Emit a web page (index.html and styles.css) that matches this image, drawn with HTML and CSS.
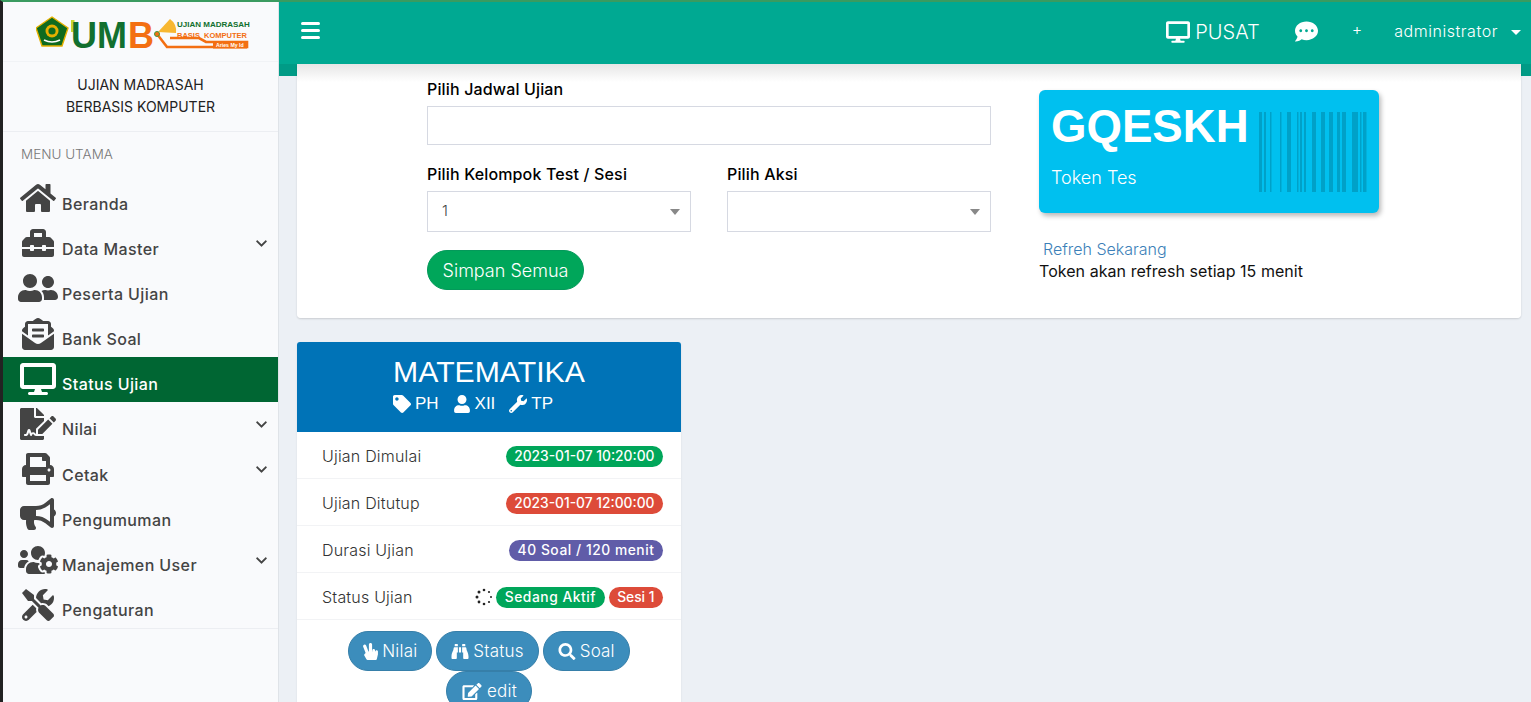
FILE: index.html
```html
<!DOCTYPE html>
<html lang="id">
<head>
<meta charset="utf-8">
<title>Status Ujian</title>
<link rel="stylesheet" href="styles.css">
</head>
<body>
<svg class="defs" width="0" height="0" aria-hidden="true">
<defs>
<symbol id="i-home" viewBox="0 0 576 512"><path d="M280.37 148.26L96 300.11V464a16 16 0 0 0 16 16l112.06-.29a16 16 0 0 0 15.92-16V368a16 16 0 0 1 16-16h64a16 16 0 0 1 16 16v95.64a16 16 0 0 0 16 16.05L464 480a16 16 0 0 0 16-16V300L295.67 148.26a12.19 12.19 0 0 0-15.3 0zM571.6 251.47L488 182.56V44.05a12 12 0 0 0-12-12h-56a12 12 0 0 0-12 12v72.61L318.47 43a48 48 0 0 0-61 0L4.34 251.47a12 12 0 0 0-1.6 16.9l25.5 31A12 12 0 0 0 45.15 301l235.22-193.74a12.19 12.19 0 0 1 15.3 0L530.9 301a12 12 0 0 0 16.9-1.6l25.5-31a12 12 0 0 0-1.7-16.93z"/></symbol>
<symbol id="i-toolbox" viewBox="0 0 512 512"><path d="M502.63 214.63l-45.25-45.25c-6-6-14.14-9.37-22.63-9.37H384V80c0-26.51-21.49-48-48-48H176c-26.51 0-48 21.49-48 48v80H77.25c-8.49 0-16.62 3.37-22.63 9.37L9.37 214.63c-6 6-9.37 14.14-9.37 22.63V320h128v-16c0-8.84 7.16-16 16-16h32c8.84 0 16 7.16 16 16v16h128v-16c0-8.84 7.16-16 16-16h32c8.84 0 16 7.16 16 16v16h128v-82.75c0-8.48-3.37-16.62-9.37-22.62zM320 160H192V96h128v64zm64 208c0 8.84-7.16 16-16 16h-32c-8.84 0-16-7.16-16-16v-16H192v16c0 8.84-7.16 16-16 16h-32c-8.84 0-16-7.16-16-16v-16H0v96c0 17.67 14.33 32 32 32h448c17.67 0 32-14.33 32-32v-96H384v16z"/></symbol>
<symbol id="i-friends" viewBox="0 0 640 512"><path d="M192 256c61.9 0 112-50.1 112-112S253.9 32 192 32 80 82.1 80 144s50.1 112 112 112zm76.8 32h-8.3c-20.8 10-43.9 16-68.5 16s-47.6-6-68.5-16h-8.3C51.6 288 0 339.6 0 403.2V432c0 26.5 21.5 48 48 48h288c26.5 0 48-21.5 48-48v-28.8c0-63.6-51.6-115.2-115.2-115.2zM480 256c53 0 96-43 96-96s-43-96-96-96-96 43-96 96 43 96 96 96zm48 32h-3.8c-13.9 4.8-28.6 8-44.2 8s-30.3-3.2-44.2-8H432c-20.4 0-39.2 5.9-55.7 15.4 24.4 26.3 39.7 61.2 39.7 99.8v38.4c0 2.2-.5 4.3-.6 6.4H592c26.5 0 48-21.5 48-48 0-61.9-50.1-112-112-112z"/></symbol>
<symbol id="i-envelope" viewBox="0 0 512 512"><path d="M176 216h160c8.84 0 16-7.16 16-16v-16c0-8.84-7.16-16-16-16H176c-8.84 0-16 7.16-16 16v16c0 8.84 7.16 16 16 16zm-16 80c0 8.84 7.16 16 16 16h160c8.84 0 16-7.16 16-16v-16c0-8.84-7.16-16-16-16H176c-8.84 0-16 7.16-16 16v16zm96 121.13c-16.42 0-32.84-5.06-46.86-15.19L0 250.86V464c0 26.51 21.49 48 48 48h416c26.51 0 48-21.49 48-48V250.86L302.86 401.94c-14.02 10.12-30.44 15.19-46.86 15.19zm237.61-254.18c-8.85-6.94-17.24-13.47-29.61-22.81V96c0-26.51-21.49-48-48-48h-77.55c-3.04-2.2-5.87-4.26-9.04-6.56C312.6 29.17 279.2-.35 256 0c-23.2-.35-56.59 29.17-73.41 41.44-3.17 2.3-6 4.36-9.04 6.56H96c-26.51 0-48 21.49-48 48v44.14c-12.37 9.33-20.76 15.87-29.61 22.81A47.995 47.995 0 0 0 0 200.72v10.65l96 69.35V96h320v184.72l96-69.35v-10.65c0-14.74-6.78-28.67-18.39-37.77z"/></symbol>
<symbol id="i-desktop" viewBox="0 0 576 512"><path d="M528 0H48C21.5 0 0 21.5 0 48v320c0 26.5 21.5 48 48 48h192l-16 48h-72c-13.3 0-24 10.7-24 24s10.7 24 24 24h272c13.3 0 24-10.7 24-24s-10.7-24-24-24h-72l-16-48h192c26.5 0 48-21.5 48-48V48c0-26.5-21.5-48-48-48zm-16 352H64V64h448v288z"/></symbol>
<symbol id="i-sign" viewBox="0 0 576 512"><path d="M218.17 424.14c-2.95-5.92-8.09-6.52-10.17-6.52s-7.22.59-10.02 6.19l-7.67 15.34c-6.37 12.78-25.03 11.37-29.48-2.09L144 386.59l-10.61 31.88c-5.89 17.66-22.38 29.53-41 29.53H80c-8.84 0-16-7.16-16-16s7.16-16 16-16h12.39c4.83 0 9.11-3.08 10.64-7.66l18.19-54.64c3.3-9.81 12.44-16.41 22.78-16.41s19.48 6.59 22.77 16.41l13.88 41.64c19.75-16.19 54.06-9.7 66 14.16 1.89 3.78 5.49 5.95 9.36 6.26v-82.12l128-127.09V160H248c-13.2 0-24-10.8-24-24V0H24C10.7 0 0 10.7 0 24v464c0 13.3 10.7 24 24 24h336c13.3 0 24-10.7 24-24v-40l-128-.11c-16.12-.31-30.58-9.28-37.83-23.75zM384 121.9c0-6.3-2.5-12.4-7-16.9L279.1 7c-4.5-4.5-10.6-7-17-7H256v128h128v-6.1zm-96 225.06V416h68.99l161.68-162.78-67.88-67.88L288 346.96zm280.54-179.63l-31.87-31.87c-9.94-9.94-26.07-9.94-36.01 0l-27.25 27.25 67.88 67.88 27.25-27.25c9.95-9.94 9.95-26.07 0-36.01z"/></symbol>
<symbol id="i-print" viewBox="0 0 512 512"><path d="M448 192V77.25c0-8.49-3.37-16.62-9.37-22.63L393.37 9.37c-6-6-14.14-9.37-22.63-9.37H96C78.33 0 64 14.33 64 32v160c-35.35 0-64 28.65-64 64v112c0 8.84 7.16 16 16 16h48v96c0 17.67 14.33 32 32 32h320c17.67 0 32-14.33 32-32v-96h48c8.84 0 16-7.16 16-16V256c0-35.35-28.65-64-64-64zm-64 256H128v-96h256v96zm0-224H128V64h192v48c0 8.84 7.16 16 16 16h48v96zm48 72c-13.25 0-24-10.75-24-24 0-13.26 10.75-24 24-24s24 10.74 24 24c0 13.25-10.75 24-24 24z"/></symbol>
<symbol id="i-bullhorn" viewBox="0 0 576 512"><path d="M576 240c0-23.63-12.95-44.04-32-55.12V32.01C544 23.26 537.02 0 512 0c-7.12 0-14.19 2.38-19.98 7.02l-85.03 68.03C364.28 109.19 310.66 128 256 128H64c-35.35 0-64 28.65-64 64v96c0 35.35 28.65 64 64 64h33.7c-1.39 10.48-2.18 21.14-2.18 32 0 39.77 9.26 77.35 25.56 110.94 5.19 10.69 16.52 17.06 28.4 17.06h74.28c26.05 0 41.69-29.84 25.9-50.56-16.4-21.52-26.15-48.36-26.15-77.44 0-11.11 1.62-21.79 4.41-32H256c54.66 0 108.28 18.81 150.98 52.95l85.03 68.03a32.023 32.023 0 0 0 19.98 7.02c24.92 0 32-22.78 32-32V295.13C563.05 284.04 576 263.63 576 240zm-96 141.42l-33.05-26.44C392.95 311.78 325.12 288 256 288v-96c69.12 0 136.95-23.78 190.95-66.98L480 98.58v282.84z"/></symbol>
<symbol id="i-userscog" viewBox="0 0 640 512"><path d="M610.5 341.3c2.6-14.1 2.6-28.5 0-42.6l25.8-14.9c3-1.7 4.3-5.2 3.3-8.5-6.7-21.5-18.2-41-33.2-57.1-2.3-2.5-6-3.1-9-1.4l-25.8 14.9c-10.9-9.3-23.4-16.5-36.9-21.3v-29.8c0-3.4-2.4-6.4-5.7-7.1-22.3-5-45-4.8-66.2 0-3.3.7-5.7 3.7-5.7 7.1v29.8c-13.5 4.8-26 12-36.9 21.3l-25.8-14.9c-2.9-1.7-6.7-1.1-9 1.4-15 16.1-26.5 35.6-33.2 57.1-1 3.3.4 6.8 3.3 8.5l25.8 14.9c-2.6 14.1-2.6 28.5 0 42.6l-25.8 14.9c-3 1.7-4.3 5.2-3.3 8.5 6.7 21.5 18.2 41 33.2 57.1 2.3 2.5 6 3.1 9 1.4l25.8-14.9c10.9 9.3 23.4 16.5 36.9 21.3v29.8c0 3.4 2.4 6.4 5.7 7.1 22.3 5 45 4.8 66.2 0 3.3-.7 5.7-3.7 5.7-7.1v-29.8c13.5-4.8 26-12 36.9-21.3l25.8 14.9c2.9 1.7 6.7 1.1 9-1.4 15-16.1 26.5-35.6 33.2-57.1 1-3.3-.4-6.8-3.3-8.5l-25.8-14.9zM496 368.5c-26.8 0-48.5-21.8-48.5-48.5s21.8-48.5 48.5-48.5 48.5 21.8 48.5 48.5-21.7 48.5-48.5 48.5zM96 224c35.3 0 64-28.7 64-64s-28.7-64-64-64-64 28.7-64 64 28.7 64 64 64zm224 32c1.9 0 3.7-.5 5.6-.6 8.3-21.7 20.5-42.1 36.3-59.2 7.4-8 17.9-12.6 28.9-12.6 6.9 0 13.7 1.8 19.6 5.3l7.9 4.6c.8-.5 1.6-.9 2.4-1.4 7-14.6 11.2-30.8 11.2-48 0-61.9-50.1-112-112-112S208 82.1 208 144c0 61.9 50.1 112 112 112zm105.2 194.5c-2.3-1.2-4.6-2.6-6.8-3.9-8.2 4.8-15.3 9.8-27.5 9.8-10.9 0-21.4-4.6-28.9-12.6-18.3-19.8-32.3-43.9-40.2-69.6-10.7-34.5 24.9-49.7 25.8-50.3-.1-2.6-.1-5.2 0-7.8l-7.9-4.6c-3.8-2.2-7-5-9.8-8.1-3.3.2-6.5.6-9.8.6-24.6 0-47.6-6-68.5-16h-8.3C179.6 288 128 339.6 128 403.2V432c0 26.5 21.5 48 48 48h255.4c-3.7-6-6.2-12.8-6.2-20.3v-9.2zM173.1 274.6C161.5 263.1 145.6 256 128 256H64c-35.3 0-64 28.7-64 64v32c0 17.7 14.3 32 32 32h65.9c6.3-47.4 34.9-87.3 75.2-109.4z"/></symbol>
<symbol id="i-tools" viewBox="0 0 512 512"><path d="M501.1 395.7L384 278.6c-23.1-23.1-57.6-27.6-85.4-13.9L192 158.1V96L64 0 0 64l96 128h62.1l106.6 106.6c-13.6 27.8-9.2 62.3 13.9 85.4l117.1 117.1c14.6 14.6 38.2 14.6 52.7 0l52.7-52.7c14.5-14.6 14.5-38.2 0-52.7zM331.7 225c28.3 0 54.9 11 74.9 31l19.4 19.4c15.8-6.9 30.8-16.5 43.8-29.5 37.1-37.1 49.7-89.3 37.9-136.7-2.2-9-13.5-12.1-20.1-5.5l-74.4 74.4-67.9-11.3L334 98.9l74.4-74.4c6.6-6.6 3.4-17.9-5.7-20.2-47.4-11.7-99.6.9-136.6 37.9-28.5 28.5-41.9 66.1-41.2 103.6l82.1 82.1c8.1-1.9 16.5-2.9 24.7-2.9zm-103.9 82l-56.7-56.7L18.7 402.8c-25 25-25 65.5 0 90.5s65.5 25 90.5 0l123.6-123.6c-7.6-19.9-9.9-41.6-5-62.7zM64 472c-13.2 0-24-10.8-24-24 0-13.3 10.7-24 24-24s24 10.7 24 24c0 13.2-10.7 24-24 24z"/></symbol>
<symbol id="i-chevron" viewBox="0 0 448 512"><path d="M207.029 381.476L12.686 187.132c-9.373-9.373-9.373-24.569 0-33.941l22.667-22.667c9.357-9.357 24.522-9.375 33.901-.04L224 284.505l154.745-154.021c9.379-9.335 24.544-9.317 33.901.04l22.667 22.667c9.373 9.373 9.373 24.569 0 33.941L240.971 381.476c-9.373 9.372-24.569 9.372-33.942 0z"/></symbol>
<symbol id="i-comment" viewBox="0 0 512 512"><path d="M256 32C114.6 32 0 125.1 0 240c0 49.6 21.4 95 57 130.7C44.5 421.1 2.7 466 2.2 466.5c-2.2 2.3-2.8 5.7-1.5 8.7S4.8 480 8 480c66.3 0 116-31.8 140.6-51.4 32.7 12.3 69 19.4 107.4 19.4 141.4 0 256-93.1 256-208S397.4 32 256 32zM128 272c-17.7 0-32-14.3-32-32s14.3-32 32-32 32 14.3 32 32-14.3 32-32 32zm128 0c-17.7 0-32-14.3-32-32s14.3-32 32-32 32 14.3 32 32-14.3 32-32 32zm128 0c-17.7 0-32-14.3-32-32s14.3-32 32-32 32 14.3 32 32-14.3 32-32 32z"/></symbol>
<symbol id="i-tag" viewBox="0 0 512 512"><path d="M0 252.118V48C0 21.49 21.49 0 48 0h204.118a48 48 0 0 1 33.941 14.059l211.882 211.882c18.745 18.745 18.745 49.137 0 67.882L293.823 497.941c-18.745 18.745-49.137 18.745-67.882 0L14.059 286.059A48 48 0 0 1 0 252.118zM112 64c-26.51 0-48 21.49-48 48s21.49 48 48 48 48-21.49 48-48-21.49-48-48-48z"/></symbol>
<symbol id="i-user" viewBox="0 0 448 512"><path d="M224 256c70.7 0 128-57.3 128-128S294.7 0 224 0 96 57.3 96 128s57.3 128 128 128zm89.6 32h-16.7c-22.2 10.2-46.9 16-72.9 16s-50.6-5.8-72.9-16h-16.7C60.2 288 0 348.2 0 422.4V464c0 26.5 21.5 48 48 48h352c26.5 0 48-21.5 48-48v-41.6c0-74.2-60.2-134.4-134.4-134.4z"/></symbol>
<symbol id="i-wrench" viewBox="0 0 512 512"><path d="M507.73 109.1c-2.24-9.03-13.54-12.09-20.12-5.51l-74.36 74.36-67.88-11.31-11.31-67.88 74.36-74.36c6.62-6.62 3.43-17.9-5.66-20.16-47.38-11.74-99.55.91-136.58 37.93-39.64 39.64-50.55 97.1-34.05 147.2L18.74 402.76c-24.99 24.99-24.99 65.51 0 90.5 24.99 24.99 65.51 24.99 90.5 0l213.21-213.21c50.12 16.71 107.47 5.68 147.37-34.22 37.07-37.07 49.7-89.32 37.91-136.73zM64 472c-13.25 0-24-10.75-24-24 0-13.26 10.75-24 24-24s24 10.74 24 24c0 13.25-10.75 24-24 24z"/></symbol>
<symbol id="i-search" viewBox="0 0 512 512"><path d="M505 442.7L405.3 343c-4.5-4.5-10.6-7-17-7H372c27.6-35.3 44-79.7 44-128C416 93.1 322.9 0 208 0S0 93.1 0 208s93.1 208 208 208c48.3 0 92.7-16.4 128-44v16.3c0 6.4 2.5 12.5 7 17l99.7 99.7c9.4 9.4 24.6 9.4 33.9 0l28.3-28.3c9.4-9.4 9.4-24.6.1-34zM208 336c-70.7 0-128-57.2-128-128 0-70.7 57.2-128 128-128 70.7 0 128 57.2 128 128 0 70.7-57.2 128-128 128z"/></symbol>
<symbol id="i-edit" viewBox="0 0 576 512"><path d="M402.6 83.2l90.2 90.2c3.8 3.8 3.8 10 0 13.8L274.4 405.6l-92.8 10.3c-12.4 1.4-22.9-9.1-21.5-21.5l10.3-92.8L388.8 83.2c3.8-3.8 10-3.8 13.8 0zm162-22.9l-48.8-48.8c-15.2-15.2-39.9-15.2-55.2 0l-35.4 35.4c-3.8 3.8-3.8 10 0 13.8l90.2 90.2c3.8 3.8 10 3.8 13.8 0l35.4-35.4c15.2-15.3 15.2-40 0-55.2zM384 346.2V448H64V128h229.8c3.2 0 6.2-1.3 8.5-3.5l40-40c7.6-7.6 2.2-20.5-8.5-20.5H48C21.5 64 0 85.5 0 112v352c0 26.5 21.5 48 48 48h352c26.5 0 48-21.5 48-48V306.2c0-10.7-12.9-16-20.5-8.5l-40 40c-2.2 2.3-3.5 5.3-3.5 8.5z"/></symbol>
<symbol id="i-binoculars" viewBox="0 0 512 512"><path d="M416 48c0-8.84-7.16-16-16-16h-64c-8.84 0-16 7.16-16 16v48h96V48zM63.91 159.99C61.4 253.84 3.46 274.22 0 404v44c0 17.67 14.33 32 32 32h96c17.67 0 32-14.33 32-32V288h32V128H95.84c-17.63 0-31.45 14.37-31.93 31.99zm384.18 0c-.48-17.62-14.3-31.99-31.93-31.99H320v160h32v160c0 17.67 14.33 32 32 32h96c17.67 0 32-14.33 32-32v-44c-3.46-129.78-61.4-150.16-63.91-244.01zM176 32h-64c-8.84 0-16 7.16-16 16v48h96V48c0-8.84-7.16-16-16-16zm48 256h64V128h-64v160z"/></symbol>
<symbol id="i-peace" viewBox="0 0 448 512"><path d="M408 216c-22.092 0-40 17.909-40 40h-8v-32c0-22.091-17.908-40-40-40s-40 17.909-40 40v32h-8V48c0-26.51-21.49-48-48-48s-48 21.49-48 48v208h-13.572L92.688 78.449C82.994 53.774 55.134 41.63 30.461 51.324 5.787 61.017-6.356 88.877 3.337 113.551l74.765 190.342-31.09 24.872c-15.381 12.306-19.515 33.978-9.741 51.081l64 112A39.998 39.998 0 0 0 136 512h240c18.562 0 34.686-12.77 38.937-30.838l32-136A39.97 39.97 0 0 0 448 336v-80c0-22.091-17.908-40-40-40z"/></symbol>
</defs>
</svg>

<div class="app">
  <aside class="sidebar">
    <div class="logo-box">
      <svg class="logo" viewBox="0 -3 216 43" width="216" height="43" role="img" aria-label="UMB">
        <path d="M16 0 L32 11 L26 29 L6 29 L0 11 Z" fill="#0f6b1f" stroke="#e5b000" stroke-width="1.4"/>
        <circle cx="16" cy="14" r="6.5" fill="#e5b000"/>
        <circle cx="16" cy="14" r="3.6" fill="#0f6b1f"/>
        <path d="M8 23 Q16 27 24 23" fill="none" stroke="#fff" stroke-width="1.6"/>
        <rect x="35" y="3" width="3.5" height="12" fill="#c9d82f"/>
        <text class="logo-big logo-green" x="35" y="31">UM</text>
        <text class="logo-big logo-orange" x="92" y="31">B</text>
        <path d="M121 17 L131 30 L211 30 L211 25 L170 25 L163 21 L134 21" fill="none" stroke="#f36f12" stroke-width="2.6"/>
        <path d="M122 15 L134 2 Q141 7 140 16 Z" fill="#f7b731"/>
        <circle cx="121" cy="17" r="2.5" fill="#f36f12" stroke="#3d9a3d"/>
        <rect x="177" y="24.5" width="34" height="7" fill="#f36f12"/>
        <text class="logo-small logo-green" x="141" y="9.5">UJIAN MADRASAH</text>
        <text class="logo-small2 logo-orange" x="141" y="20.5">BASIS KOMPUTER</text>
        <text class="logo-tiny" x="180" y="29.8">Aries My Id</text>
      </svg>
    </div>
    <div class="brand">UJIAN MADRASAH<br>BERBASIS KOMPUTER</div>
    <div class="menu-title">MENU UTAMA</div>
    <nav class="menu">
      <a class="menu-item"><span class="mi"><svg><use href="#i-home"/></svg></span><span class="ml">Beranda</span></a>
      <a class="menu-item"><span class="mi"><svg><use href="#i-toolbox"/></svg></span><span class="ml">Data Master</span><svg class="chev"><use href="#i-chevron"/></svg></a>
      <a class="menu-item"><span class="mi"><svg><use href="#i-friends"/></svg></span><span class="ml">Peserta Ujian</span></a>
      <a class="menu-item"><span class="mi"><svg><use href="#i-envelope"/></svg></span><span class="ml">Bank Soal</span></a>
      <a class="menu-item active"><span class="mi"><svg><use href="#i-desktop"/></svg></span><span class="ml">Status Ujian</span></a>
      <a class="menu-item"><span class="mi"><svg><use href="#i-sign"/></svg></span><span class="ml">Nilai</span><svg class="chev"><use href="#i-chevron"/></svg></a>
      <a class="menu-item"><span class="mi"><svg><use href="#i-print"/></svg></span><span class="ml">Cetak</span><svg class="chev"><use href="#i-chevron"/></svg></a>
      <a class="menu-item"><span class="mi"><svg><use href="#i-bullhorn"/></svg></span><span class="ml">Pengumuman</span></a>
      <a class="menu-item"><span class="mi"><svg><use href="#i-userscog"/></svg></span><span class="ml">Manajemen User</span><svg class="chev"><use href="#i-chevron"/></svg></a>
      <a class="menu-item"><span class="mi"><svg><use href="#i-tools"/></svg></span><span class="ml">Pengaturan</span></a>
    </nav>
  </aside>

  <div class="main">
    <header class="topbar">
      <span class="burger"><i></i><i></i><i></i></span>
      <div class="topbar-right">
        <span class="pusat"><svg class="pusat-icon"><use href="#i-desktop"/></svg>PUSAT</span>
        <svg class="comment"><use href="#i-comment"/></svg>
        <span class="plus">+</span>
        <span class="admin">administrator</span>
        <span class="caret"></span>
      </div>
    </header>

    <main class="content">
      <section class="panel">
        <div class="form">
          <label class="field-label">Pilih Jadwal Ujian</label>
          <div class="input"></div>
          <div class="form-cols">
            <div class="form-col">
              <label class="field-label">Pilih Kelompok Test / Sesi</label>
              <div class="select"><span>1</span><b class="sel-arrow"></b></div>
            </div>
            <div class="form-col">
              <label class="field-label">Pilih Aksi</label>
              <div class="select"><span></span><b class="sel-arrow"></b></div>
            </div>
          </div>
          <button class="save">Simpan Semua</button>
        </div>
        <div class="token-col">
          <div class="token-card">
            <div class="token-text">
              <div class="token-code">GQESKH</div>
              <div class="token-label">Token Tes</div>
            </div>
            <svg class="barcode" viewBox="0 0 108 80" width="108" height="80" aria-hidden="true">
              <rect x="0" width="3" height="80"/><rect x="5" width="2" height="80"/><rect x="11" width="1.5" height="80"/><rect x="21" width="1.5" height="80"/><rect x="28" width="4" height="80"/><rect x="38" width="1.5" height="80"/><rect x="41" width="2" height="80"/><rect x="45" width="2" height="80"/><rect x="53" width="4" height="80"/><rect x="62" width="4" height="80"/><rect x="70" width="4" height="80"/><rect x="78" width="3" height="80"/><rect x="83" width="4" height="80"/><rect x="93" width="6" height="80"/><rect x="101" width="1.5" height="80"/><rect x="104" width="3.5" height="80"/>
            </svg>
          </div>
          <a class="refresh">Refreh Sekarang</a>
          <p class="token-note">Token akan refresh setiap 15 menit</p>
        </div>
      </section>

      <section class="exam">
        <div class="exam-head">
          <h2 class="exam-title">MATEMATIKA</h2>
          <div class="exam-tags">
            <span><svg><use href="#i-tag"/></svg>PH</span>
            <span><svg><use href="#i-user"/></svg>XII</span>
            <span><svg><use href="#i-wrench"/></svg>TP</span>
          </div>
        </div>
        <ul class="exam-list">
          <li><span>Ujian Dimulai</span><div class="badges"><b class="badge green">2023-01-07 10:20:00</b></div></li>
          <li><span>Ujian Ditutup</span><div class="badges"><b class="badge red">2023-01-07 12:00:00</b></div></li>
          <li><span>Durasi Ujian</span><div class="badges"><b class="badge purple wide">40 Soal / 120 menit</b></div></li>
          <li><span>Status Ujian</span><div class="badges">
            <svg class="spin" viewBox="0 0 18 18" width="18" height="18" aria-hidden="true"><circle cx="9" cy="2" r="1.3"/><circle cx="14" cy="4" r="1.1"/><circle cx="16" cy="9" r="1"/><circle cx="14" cy="14" r="1.1"/><circle cx="9" cy="16" r="1.3"/><circle cx="4" cy="14" r="1.4"/><circle cx="2" cy="9" r="1.5"/><circle cx="4" cy="4" r="1.5"/></svg>
            <b class="badge green wide">Sedang Aktif</b><b class="badge red">Sesi 1</b></div></li>
        </ul>
        <div class="exam-actions">
          <a class="pill"><svg class="pi-peace"><use href="#i-peace"/></svg>Nilai</a>
          <a class="pill"><svg class="pi-bino"><use href="#i-binoculars"/></svg>Status</a>
          <a class="pill"><svg class="pi-search"><use href="#i-search"/></svg>Soal</a>
          <a class="pill"><svg class="pi-edit"><use href="#i-edit"/></svg>edit</a>
        </div>
      </section>
    </main>
  </div>
</div>
</body>
</html>
```
FILE: styles.css
```css
* { box-sizing: border-box; }
html, body { margin: 0; height: 100%; overflow: hidden; }
body { font-family: Inter, "Open Sans", sans-serif; font-size: 15px; color: #333; }
.defs { display: block; height: 0; width: 0; overflow: hidden; }

.app {
  display: flex;
  height: 702px;
  border-top: 2px solid #3a9b60;
  border-left: 3px solid #222;
  overflow: hidden;
}

/* Sidebar */
.sidebar {
  width: 276px;
  flex: none;
  background: #f9fafc;
  border-right: 1px solid #dfe3e8;
}
.logo-box {
  height: 60px;
  padding: 12px 0 0 33px;
  border-bottom: 1px solid #f1f3f6;
}
.logo { display: block; }
.logo-big { font: 700 36px "Liberation Sans", sans-serif; }
.logo-small { font: 700 8px "Liberation Sans", sans-serif; }
.logo-small2 { font: 700 7.5px "Liberation Sans", sans-serif; word-spacing: 2px; }
.logo-tiny { font: 700 5.2px "Liberation Sans", sans-serif; fill: #fff; }
.logo-green { fill: #12702f; }
.logo-orange { fill: #f36f12; }
.brand {
  height: 70px;
  padding-top: 12px;
  text-align: center;
  font-size: 14px;
  line-height: 22px;
  color: #222;
  border-bottom: 1px solid #eceef2;
}
.menu-title {
  height: 44px;
  padding: 13px 0 0 18px;
  font-size: 13.5px;
  line-height: 18px;
  font-weight: 300;
  color: #777;
}
.menu { border-bottom: 1px solid #eceef2; }
.menu-item {
  display: flex;
  align-items: flex-start;
  height: 45.2px;
  padding: 6px 11px 0 15px;
  color: #444;
}
.menu-item.active { background: #006633; color: #fff; }
.mi { width: 40px; height: 32px; display: flex; justify-content: center; flex: none; }
.mi svg { width: 40px; height: 32px; fill: currentColor; }
.ml {
  margin: 5.5px 0 0 4px;
  line-height: 32px;
  font-size: 16px;
  font-weight: 500;
  letter-spacing: .4px;
}
.chev { width: 11px; height: 13px; margin: 10px 0 0 auto; fill: #444; }

/* Main */
.main { flex: 1; min-width: 0; display: flex; flex-direction: column; background: #ecf0f5; }
.topbar {
  height: 62px;
  flex: none;
  background: #00a992;
  color: #fff;
  display: flex;
  align-items: center;
  justify-content: space-between;
  padding: 0 10px 4px 22px;
}
.burger { display: flex; flex-direction: column; gap: 4px; width: 19px; margin-top: -2px; }
.burger i { display: block; height: 3px; border-radius: 1.5px; background: #fff; }
.topbar-right { display: flex; align-items: center; margin-top: 2px; }
.pusat { display: flex; align-items: center; font-size: 20px; font-weight: 300; }
.pusat-icon { width: 24px; height: 22px; fill: #fff; margin-right: 5px; }
.comment { width: 23px; height: 23px; fill: #fff; margin: -2px 0 0 35px; }
.plus { margin-left: 34px; font-size: 16px; font-weight: 300; position: relative; top: -3px; }
.admin { margin: -2px 0 0 32px; font-size: 16px; font-weight: 300; letter-spacing: .55px; }
.caret {
  margin-left: 13px;
  border-left: 5px solid transparent;
  border-right: 5px solid transparent;
  border-top: 5px solid #fff;
}

.content {
  flex: 1;
  min-height: 0;
  overflow: hidden;
  padding: 0 10px 0 18px;
  background: linear-gradient(#009b86 12px, transparent 12px);
}
.panel {
  display: flex;
  height: 254px;
  padding: 0 0 0 130px;
  border-radius: 0 0 4px 4px;
  background: linear-gradient(#e6e6e6, #fff 18px);
  box-shadow: 0 1px 2px rgba(0, 0, 0, .15);
}
.form { width: 564px; flex: none; padding-top: 14px; }
.field-label {
  display: block;
  font-size: 16px;
  line-height: 22px;
  font-weight: 500;
  letter-spacing: .15px;
  color: #000;
}
.input {
  height: 39px;
  margin-top: 6px;
  background: #fff;
  border: 1px solid #d6d9e2;
}
.form-cols { display: flex; gap: 36px; margin-top: 18px; }
.form-col { width: 264px; }
.select {
  display: flex;
  align-items: center;
  justify-content: space-between;
  height: 41px;
  margin-top: 6px;
  padding: 0 10px 2px 14px;
  background: #fff;
  border: 1px solid #d6d9e2;
  color: #444;
  font-size: 15px;
  font-weight: 300;
}
.sel-arrow {
  border-left: 5px solid transparent;
  border-right: 5px solid transparent;
  border-top: 6px solid #888;
  margin-top: 2px;
}
.save {
  display: block;
  width: 157px;
  height: 40px;
  margin-top: 18px;
  padding: 0;
  border: 1px solid #04995a;
  border-radius: 20px;
  background: #00a65a;
  color: #fff;
  font: 300 18px Inter, sans-serif;
}

.token-col { width: 340px; margin-left: 48px; padding-top: 26px; }
.token-card {
  display: flex;
  justify-content: space-between;
  height: 123px;
  padding: 22px 12px 0 12px;
  border-radius: 6px;
  background: #00c0ef;
  box-shadow: 2px 3px 5px rgba(0, 0, 0, .28);
  color: #fff;
}
.token-code {
  font: 700 45.6px/28px "Liberation Sans", Arial, sans-serif;
  margin-top: 1px;
}
.token-label { margin-top: 25px; font-size: 18px; line-height: 24px; font-weight: 300; }
.barcode { display: block; fill: rgba(0, 0, 0, .16); flex: none; }
.refresh {
  display: block;
  margin: 25px 0 0 4px;
  font-size: 16px;
  line-height: 22px;
  font-weight: 300;
  color: #3c7fb8;
}
.token-note { margin: 0; font-size: 16px; line-height: 22px; font-weight: 400; color: #111; letter-spacing: .05px; }

/* Exam card */
.exam {
  width: 384px;
  margin-top: 24px;
  background: #fff;
  border-radius: 3px 3px 0 0;
  box-shadow: 0 1px 2px rgba(0, 0, 0, .1);
}
.exam-head {
  height: 90px;
  padding-top: 12px;
  background: #0073b7;
  color: #fff;
  text-align: center;
  border-radius: 3px 3px 0 0;
  font-family: "Liberation Sans", Arial, sans-serif;
}
.exam-title { margin: 0; font-size: 30.2px; line-height: 35px; font-weight: 400; }
.exam-tags {
  display: flex;
  justify-content: center;
  gap: 14px;
  font-size: 17px;
  line-height: 22px;
  margin-top: 4px;
  padding-right: 32px;
}
.exam-tags span { display: flex; align-items: center; gap: 4px; }
.exam-tags svg { width: 18px; height: 18px; fill: #fff; }
.exam-list { list-style: none; margin: 0; padding: 0; }
.exam-list li {
  display: flex;
  align-items: center;
  justify-content: space-between;
  height: 47.1px;
  padding: 2px 18px 0 25px;
  border-bottom: 1px solid #f2f3f5;
  font-size: 16px;
  letter-spacing: .2px;
  font-weight: 300;
  color: #333;
}
.badges { display: flex; align-items: center; gap: 4px; }
.badge {
  padding: 0 8.5px;
  height: 21px;
  line-height: 21px;
  border-radius: 11px;
  color: #fff;
  font-size: 13.8px;
  font-weight: 500;
  letter-spacing: 0;
  white-space: nowrap;
}
.wide { letter-spacing: .55px; }
.green { background: #00a65a; }
.red { background: #dd4b39; }
.purple { background: #605ca8; }
.spin { fill: #222; margin-right: -1px; }
.exam-actions {
  display: flex;
  flex-wrap: wrap;
  justify-content: center;
  gap: 0 4px;
  padding: 11px 50px 0;
}
.pill {
  display: flex;
  align-items: center;
  justify-content: center;
  gap: 4px;
  height: 40px;
  padding: 0 14px;
  border-radius: 20px;
  background: #3c8dbc;
  border: 1px solid #367fa9;
  color: #fff;
  font-size: 17px;
  letter-spacing: .2px;
  font-weight: 300;
}
.pill svg { height: 17px; fill: #fff; }
.pi-peace { width: 15px; }
.pi-bino { width: 18px; }
.pi-search { width: 18px; }
.pi-edit { width: 22px; }
```
